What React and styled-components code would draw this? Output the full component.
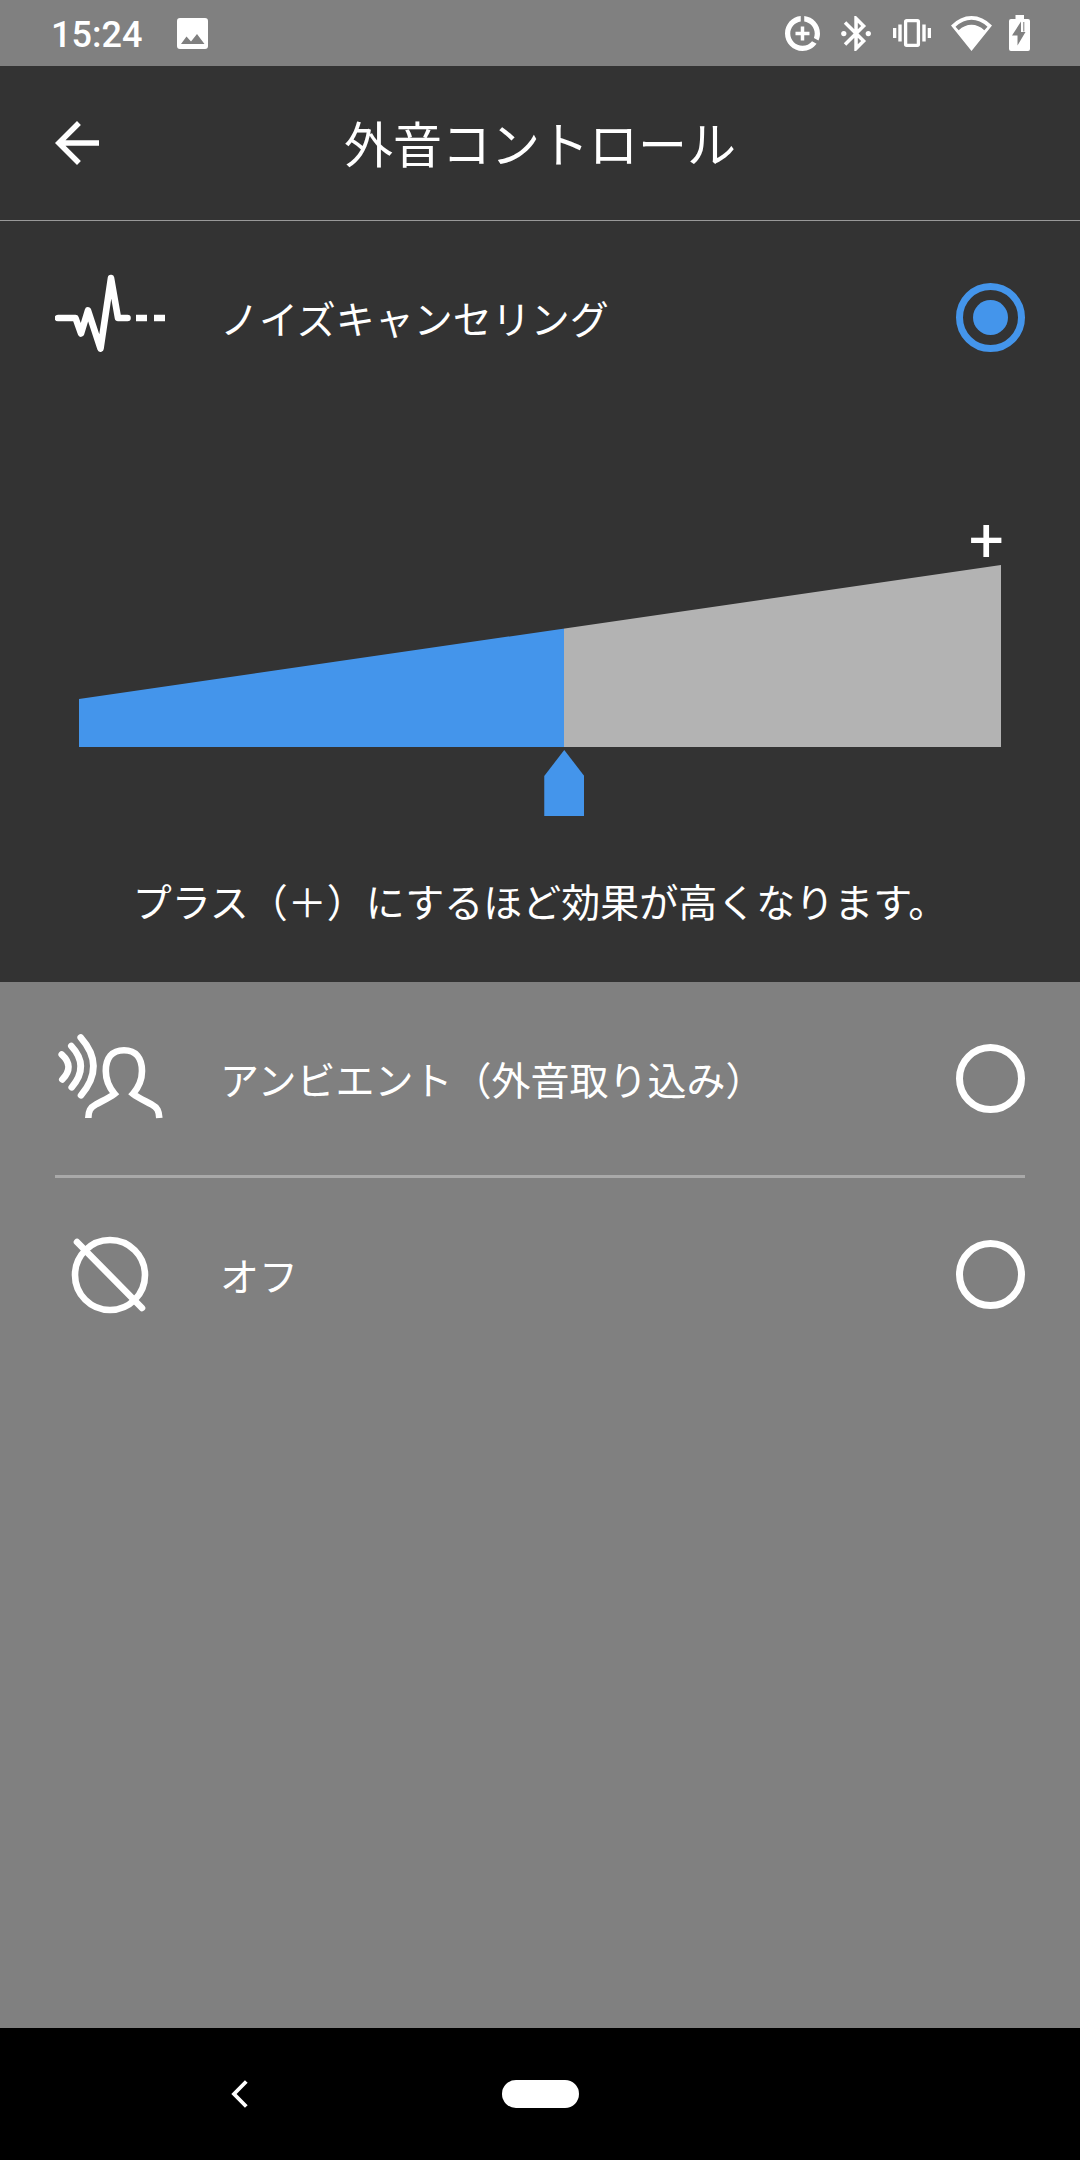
import React, { useState } from "react"
import styled, { createGlobalStyle } from "styled-components"

const MIN_LEVEL = 1
const MAX_LEVEL = 20

export default function App() {

    const [mode, setMode] = useState("noise")
    const [level, setLevel] = useState(11)

    const percent = ((level - MIN_LEVEL) / (MAX_LEVEL - MIN_LEVEL)) * 100

    return (
        <Screen>
            <GlobalStyle />
            <StatusBar>
                <Clock>15:24</Clock>
                <ImageIcon />
                <StatusIcons>
                    <DataSaverIcon />
                    <BluetoothIcon />
                    <VibrateIcon />
                    <WifiIcon />
                    <BatteryIcon />
                </StatusIcons>
            </StatusBar>
            <Header>
                <button aria-label="戻る">
                    <BackIcon />
                </button>
                <Title>外音コントロール</Title>
            </Header>
            <main>
                <Panel>
                    <Option>
                        <NoiseIcon />
                        <OptionName>ノイズキャンセリング</OptionName>
                        <Radio name="mode" checked={mode === "noise"} onChange={() => setMode("noise")} />
                    </Option>
                    <Level>
                        <Plus>+</Plus>
                        <Wedge style={{ "--level": `${percent}%` }} />
                        <Slider
                            aria-label="ノイズキャンセリングの効果"
                            min={MIN_LEVEL}
                            max={MAX_LEVEL}
                            value={level}
                            onChange={(event) => setLevel(Number(event.target.value))}
                        />
                    </Level>
                    <Caption>プラス（＋）にするほど効果が高くなります。</Caption>
                </Panel>
                <Option>
                    <AmbientIcon />
                    <OptionName>アンビエント（外音取り込み）</OptionName>
                    <Radio name="mode" checked={mode === "ambient"} onChange={() => setMode("ambient")} />
                </Option>
                <Divider />
                <Option>
                    <OffIcon />
                    <OptionName>オフ</OptionName>
                    <Radio name="mode" checked={mode === "off"} onChange={() => setMode("off")} />
                </Option>
            </main>
            <NavBar>
                <NavBack aria-label="戻る">
                    <ChevronIcon />
                </NavBack>
                <HomePill aria-label="ホーム" />
            </NavBar>
        </Screen>
    )
}

function ImageIcon() {
    return (
        <svg width="31" height="31" viewBox="0 0 31 31" fill="#fff" aria-hidden="true">
            <path fillRule="evenodd" d="M3 0h25a3 3 0 0 1 3 3v25a3 3 0 0 1-3 3H3a3 3 0 0 1-3-3V3a3 3 0 0 1 3-3zM4 26h23.500L20 16l-6 7.500-4.500-5z" />
        </svg>
    )
}

function DataSaverIcon() {
    return (
        <svg width="39" height="35" viewBox="2 2 22.300 20" fill="#fff" aria-hidden="true">
            <path d="M11 8v3H8v2h3v3h2v-3h3v-2h-3V8h-2zm2-5.950v3.030c3.390.49 6 3.390 6 6.920 0 .9-.18 1.750-.48 2.540l2.600 1.530c.56-1.240.88-2.620.88-4.070 0-5.180-3.950-9.450-9-9.950zM12 19c-3.870 0-7-3.130-7-7 0-3.530 2.610-6.430 6-6.920V2.050c-5.060.49-9 4.760-9 9.950 0 5.520 4.470 10 9.990 10 3.310 0 6.240-1.610 8.060-4.090l-2.600-1.530A6.950 6.950 0 0 1 12 19z" />
        </svg>
    )
}

function BluetoothIcon() {
    return (
        <svg width="35" height="35" viewBox="3.400 2 20 20" fill="#fff" aria-hidden="true">
            <path d="M17.710 7.710L12 2h-1v7.590L6.410 5 5 6.410 10.590 12 5 17.590 6.410 19 11 14.410V22h1l5.710-5.710-4.300-4.290 4.300-4.290zM13 5.830l1.880 1.880L13 9.590V5.830zm1.880 10.460L13 18.170v-3.760l1.880 1.880z" />
            <circle cx="5" cy="12" r="1.500" />
            <circle cx="19" cy="12" r="1.500" />
        </svg>
    )
}

function VibrateIcon() {
    return (
        <svg width="41" height="28" viewBox="0 0 41 28" fill="#fff" aria-hidden="true">
            <rect x="0" y="9" width="3.300" height="10" />
            <rect x="5.300" y="5.500" width="3.400" height="17" />
            <rect x="12.600" y="1.700" width="12.800" height="24.600" rx="1" fill="none" stroke="#fff" strokeWidth="3.300" />
            <rect x="29.300" y="5.500" width="3.400" height="17" />
            <rect x="34.700" y="9" width="3.300" height="10" />
        </svg>
    )
}

function WifiIcon() {
    return (
        <svg width="41" height="35" viewBox="0 0 41 35" fill="#fff" aria-hidden="true">
            <path fillRule="evenodd" d="M0 9.500Q9.200 0 20.500 0T41 9.500L20.500 35zM4.500 10.800l3.200 3.400Q13.500 8.700 20.500 8.700t12.800 5.500l3.200-3.400Q29 3.800 20.500 3.800T4.500 10.800z" />
        </svg>
    )
}

function BatteryIcon() {
    return (
        <svg width="21" height="36" viewBox="0 0 21 36" fill="#fff" aria-hidden="true">
            <path fillRule="evenodd" d="M6.500 0h8.500v4h4a2 2 0 0 1 2 2v28a2 2 0 0 1-2 2H2a2 2 0 0 1-2-2V6a2 2 0 0 1 2-2h4.500zM12 6.500L3 20.500h5.500v10L16.500 17H12z" />
            <path d="M14.800 7v9.500" stroke="#808080" strokeWidth="1" />
        </svg>
    )
}

function BackIcon() {
    return (
        <svg width="44" height="44" viewBox="4 4 16 16" fill="#fff" aria-hidden="true">
            <path d="M20 11H7.830l5.590-5.590L12 4l-8 8 8 8 1.410-1.410L7.830 13H20v-2z" />
        </svg>
    )
}

function NoiseIcon() {
    return (
        <OptionIcon viewBox="0 0 110 110" aria-hidden="true">
            <path d="M3 55H20.500L26 70.500 33 47.500 45.500 85.500 56 15 63 55H72.500" />
            <path d="M81 55h11M99 55h11" strokeLinecap="butt" />
        </OptionIcon>
    )
}

function AmbientIcon() {
    return (
        <OptionIcon viewBox="0 0 110 110" aria-hidden="true">
            <path d="M6.700 30.500Q20 42.500 7.300 55.500" />
            <path d="M16.300 22Q35 42 16.700 63.300" />
            <path d="M25.700 13.500Q51 42 26 71.300" />
            <path
                strokeLinecap="butt"
                strokeLinejoin="miter"
                d="M33.300 94C33.500 87 35 83.500 41 80.300C47 77 54 74 59.500 69.800C53 62 50.800 55 50.800 47C50.800 34 57 26.300 69 26.300S87 34 87 47C87 55 84.800 62 78 69.800C83.500 74 90.500 77 96.500 80.300C102.500 83.500 104 87 104.300 94"
            />
        </OptionIcon>
    )
}

function OffIcon() {
    return (
        <OptionIcon viewBox="0 0 110 110" aria-hidden="true">
            <circle cx="55" cy="55" r="35" />
            <path d="M22 22l65 66" />
        </OptionIcon>
    )
}

function ChevronIcon() {
    return (
        <svg width="17" height="28" viewBox="0 0 17 28" fill="none" stroke="#fff" strokeWidth="3.800" aria-hidden="true">
            <path d="M15.300 1.500L3 14 15.300 26.500" />
        </svg>
    )
}

const GlobalStyle = createGlobalStyle`
    * {
        box-sizing: border-box;
    }
    body {
        margin: 0;
        background: #808080;
        color: #fff;
        font-family: "Noto Sans CJK JP", sans-serif;
    }
    button {
        display: flex;
        padding: 0;
        border: none;
        background: none;
        cursor: pointer;
    }
    svg {
        display: block;
        flex: none;
    }
`

const Screen = styled.div`
    display: flex;
    flex-direction: column;
    min-height: 100vh;
`

const StatusBar = styled.div`
    display: flex;
    align-items: center;
    height: 66px;
    padding: 0 50px 0 51px;
    gap: 35px;
`

const Clock = styled.span`
    padding-top: 4px;
    font-family: Roboto, sans-serif;
    font-size: 36px;
    font-weight: 500;
    line-height: 48px;
`

const StatusIcons = styled.div`
    display: flex;
    align-items: center;
    gap: 17px;
    margin-left: auto;
`

const Header = styled.header`
    display: grid;
    grid-template-columns: 44px 1fr 44px;
    align-items: center;
    height: 155px;
    padding: 0 55px;
    border-bottom: 1px solid #999;
    background: #333;
`

const Title = styled.h1`
    margin: 0;
    padding-bottom: 3px;
    font-size: 49px;
    font-weight: 400;
    line-height: 72px;
    text-align: center;
`

const Panel = styled.section`
    padding-bottom: 54px;
    background: #333;
`

const Option = styled.label`
    display: flex;
    align-items: center;
    gap: 55px;
    height: 193px;
    padding: 0 55px;
    cursor: pointer;
`

const OptionIcon = styled.svg`
    width: 110px;
    height: 110px;
    fill: none;
    stroke: #fff;
    stroke-width: 6.6;
    stroke-linecap: round;
    stroke-linejoin: round;
`

const OptionName = styled.span`
    flex: 1;
    padding-bottom: 2px;
    font-size: 39px;
    line-height: 56px;
`

const Radio = styled.input.attrs({ type: "radio" })`
    appearance: none;
    width: 69px;
    height: 69px;
    margin: 0;
    border: 7px solid #fff;
    border-radius: 50%;

    &:checked {
        padding: 10px;
        border-color: #4495eb;
        background: #4495eb content-box;
    }
`

const Level = styled.div`
    display: flex;
    flex-direction: column;
    padding: 101px 59px 0;
`

const Plus = styled.span`
    align-self: flex-end;
    margin-right: 17px;
    font-family: Roboto, sans-serif;
    font-size: 62px;
    line-height: 50px;
`

const Wedge = styled.div`
    height: 182px;
    margin: 0 20px;
    background: linear-gradient(to right, #4495eb var(--level), #b3b3b3 var(--level));
    clip-path: polygon(0 134px, 100% 0, 100% 100%, 0 100%);
`

const Slider = styled.input.attrs({ type: "range" })`
    appearance: none;
    width: 100%;
    height: 66px;
    margin: 3px 0 0;
    background: none;
    cursor: pointer;

    &::-webkit-slider-thumb {
        appearance: none;
        width: 40px;
        height: 66px;
        background: #4495eb;
        clip-path: polygon(50% 0, 100% 26px, 100% 100%, 0 100%, 0 26px);
    }
`

const Caption = styled.p`
    margin: 56px 0 0;
    font-size: 39px;
    line-height: 56px;
    text-align: center;
`

const Divider = styled.hr`
    height: 3px;
    margin: 0 55px;
    border: none;
    background: #a9a9a9;
`

const NavBar = styled.nav`
    display: grid;
    grid-template-columns: 1fr 77px 1fr;
    align-items: center;
    height: 132px;
    margin-top: auto;
    padding: 0 231px;
    background: #000;
`

const NavBack = styled.button`
    justify-self: start;
`

const HomePill = styled.button`
    height: 28px;
    border-radius: 14px;
    background: #fff;
`
